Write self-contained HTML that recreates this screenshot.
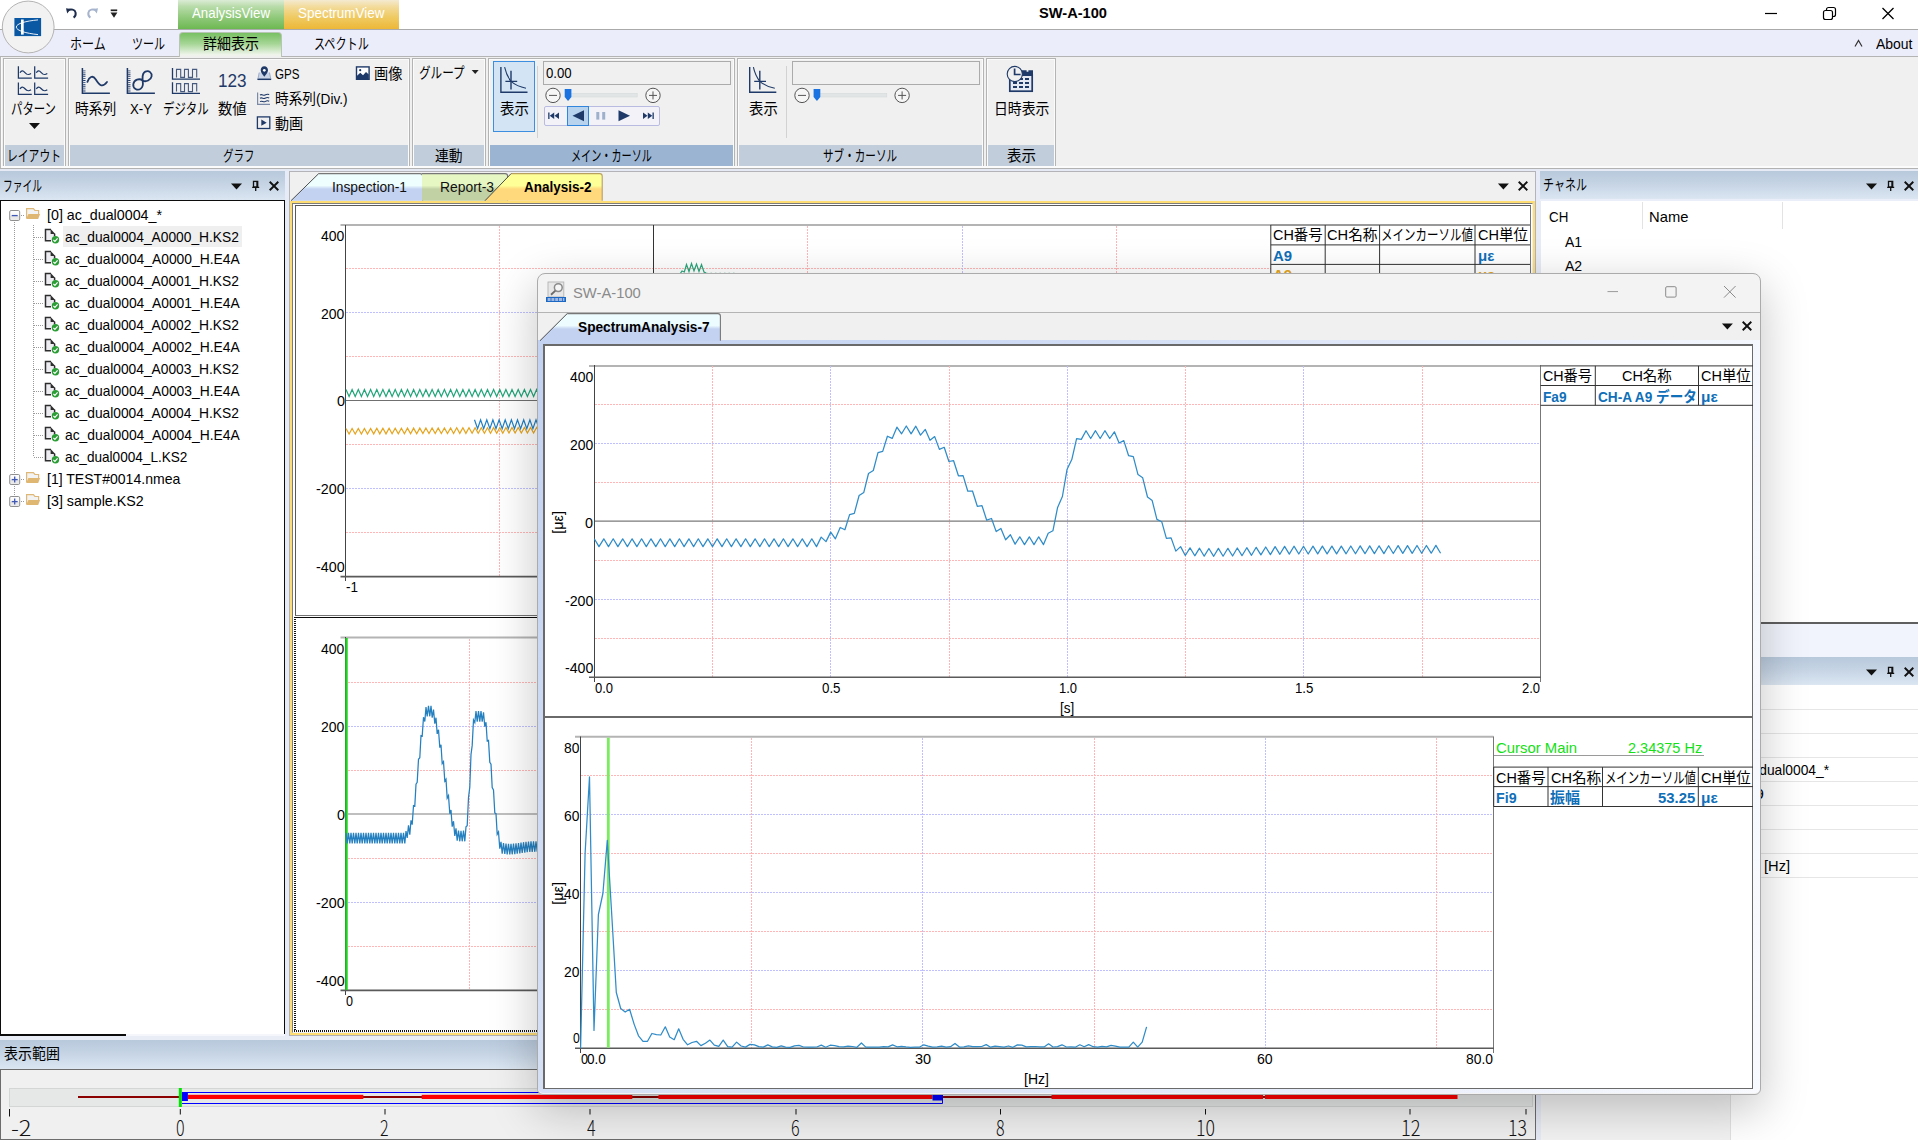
<!DOCTYPE html>
<html lang="ja"><head><meta charset="utf-8"><title>SW-A-100</title>
<style>
html,body{margin:0;padding:0}
body{width:1918px;height:1140px;overflow:hidden;position:relative;background:#f0f0f0;font-family:'Liberation Sans','Noto Sans CJK JP',sans-serif;font-size:15px;color:#000}
.b{position:absolute;display:block}
.t{position:absolute;white-space:pre;transform-origin:0 50%;display:block}
svg{overflow:visible}
svg text{font-family:'Liberation Sans','Noto Sans CJK JP',sans-serif}
</style></head>
<body>
<!-- p1_top -->
<div class="b" style="left:0px;top:0px;width:1918px;height:29px;background:#fff"></div>
<div class="b" style="left:0px;top:29px;width:1918px;height:1px;background:#aaa"></div>
<div class="b" style="left:0px;top:30px;width:1918px;height:26px;background:#ecedfb"></div>
<div class="b" style="left:0px;top:56px;width:1918px;height:1px;background:#b4b4b4"></div>
<div class="b" style="left:0px;top:57px;width:1918px;height:109px;background:#f0f0f0"></div>
<div class="b" style="left:0px;top:165.7px;width:1918px;height:2.0px;background:#fbfbfb"></div>
<div class="b" style="left:0px;top:167.7px;width:1918px;height:1.6000000000000227px;background:#b2b2b2"></div>
<div class="b" style="left:0px;top:169.3px;width:1918px;height:1.6999999999999886px;background:#e6eaf4"></div>
<div class="b" style="left:0px;top:57px;width:1px;height:111px;background:#b8b8b8"></div>
<div class="b" style="left:1px;top:57px;width:1px;height:109px;background:#fbfbfb"></div>
<div class="b" style="left:178px;top:0px;width:106px;height:29px;background:linear-gradient(#dcecd6,#b9dcab 22%,#90c97b 60%,#6db852)"></div>
<div class="b" style="left:284px;top:0px;width:115px;height:29px;background:linear-gradient(#f4ead0,#f2da98 25%,#efc95f 62%,#edb838)"></div>
<span class="t" style="left:192.0px;top:3.0px;font-size:15px;line-height:20px;font-weight:400;color:#fff;transform:scaleX(0.8853);">AnalysisView</span>
<span class="t" style="left:298.3px;top:3.0px;font-size:15px;line-height:20px;font-weight:400;color:#fff;transform:scaleX(0.8959);">SpectrumView</span>
<div class="b" style="left:179px;top:32px;width:103px;height:25px;background:linear-gradient(#78bf62,#a6d696 45%,#eef4ea 90%,#f0f0f0);border:1px solid #b8c4b4;border-bottom:none;border-radius:4px 4px 0 0;box-sizing:border-box"></div>
<span class="t" style="left:70.0px;top:34.0px;font-size:15px;line-height:20px;font-weight:400;color:#000;transform:scaleX(0.8011);">ホーム</span>
<span class="t" style="left:131.7px;top:34.0px;font-size:15px;line-height:20px;font-weight:400;color:#000;transform:scaleX(0.7353);">ツール</span>
<span class="t" style="left:202.9px;top:34.0px;font-size:15px;line-height:20px;font-weight:400;color:#000;transform:scaleX(0.9314);">詳細表示</span>
<span class="t" style="left:314.2px;top:34.0px;font-size:15px;line-height:20px;font-weight:400;color:#000;transform:scaleX(0.7410);">スペクトル</span>
<span class="t" style="left:1875.5px;top:33.5px;font-size:15px;line-height:20px;font-weight:400;color:#000;transform:scaleX(0.9310);">About</span>
<svg class="b" style="left:1853px;top:38px" width="12" height="10"><path d="M2 8.5 L5.5 2.5 L9 8.5" fill="none" stroke="#333" stroke-width="1.2"/></svg>
<span class="t" style="left:1039.0px;top:3.0px;font-size:15px;line-height:20px;font-weight:700;color:#000;transform:scaleX(0.9753);">SW-A-100</span>
<svg class="b" style="left:1760px;top:0" width="158" height="29"><path d="M5 13.5 H17" stroke="#000" stroke-width="1.2"/><rect x="63.5" y="10.5" width="9" height="9" rx="2" fill="#fff" stroke="#000" stroke-width="1.2"/><path d="M66.5 10 V9.5 a2 2 0 0 1 2 -2 H73.5 a2 2 0 0 1 2 2 V14.5 a2 2 0 0 1 -2 2 H73" fill="none" stroke="#000" stroke-width="1.2"/><path d="M122.5 8 L133.5 19 M133.5 8 L122.5 19" stroke="#000" stroke-width="1.3"/></svg>
<svg class="b" style="left:0;top:0" width="58" height="56"><circle cx="28.2" cy="27" r="25.9" fill="#f2f2f2" stroke="#b4b4b4" stroke-width="1"/><rect x="14.4" y="18" width="26.7" height="18.1" fill="#0a57a4"/><path d="M38 19.9 C26 21 16.3 23.5 16.3 27.1 C16.3 30.6 26 33.3 38 34.6" stroke="#fff" stroke-width="0.9" fill="none"/><rect x="21" y="19.5" width="2.7" height="15.1" fill="#fff"/></svg>
<svg class="b" style="left:60px;top:4px" width="64" height="18"><path d="M7.6 6.3 C11 4.6 15 5.4 15.6 8.6 C16 10.8 15 12.6 13.6 13.6" fill="none" stroke="#1f2d4d" stroke-width="2"/><path d="M6 4.2 L10.8 5 L7.2 9.4 Z" fill="#1f2d4d"/><path d="M36.4 6.3 C33 4.6 29 5.4 28.4 8.6 C28 10.8 29 12.6 30.4 13.6" fill="none" stroke="#a7b4cd" stroke-width="2"/><path d="M38 4.2 L33.2 5 L36.8 9.4 Z" fill="#a7b4cd"/><path d="M50.7 6.3 H57.2" stroke="#222" stroke-width="1.7"/><path d="M50.5 8.6 H57.4 L54 13.8 Z" fill="#222"/></svg>
<div class="b" style="left:3px;top:58px;width:63px;height:107.69999999999999px;border:1px solid #b4b4b4;border-bottom:none;box-sizing:border-box;box-shadow:inset 1px 1px 0 0 #fbfbfb,inset -1px 0 0 0 #fbfbfb"></div><div class="b" style="left:5px;top:145px;width:59px;height:20.69999999999999px;background:#c1cddb"></div><span class="t" style="left:7.2px;top:145.5px;font-size:15px;line-height:20px;font-weight:400;color:#000;transform:scaleX(0.7199);">レイアウト</span>
<div class="b" style="left:68px;top:58px;width:342px;height:107.69999999999999px;border:1px solid #b4b4b4;border-bottom:none;box-sizing:border-box;box-shadow:inset 1px 1px 0 0 #fbfbfb,inset -1px 0 0 0 #fbfbfb"></div><div class="b" style="left:70px;top:145px;width:338px;height:20.69999999999999px;background:#c1cddb"></div><span class="t" style="left:223.4px;top:145.5px;font-size:15px;line-height:20px;font-weight:400;color:#000;transform:scaleX(0.6975);">グラフ</span>
<div class="b" style="left:412px;top:58px;width:74px;height:107.69999999999999px;border:1px solid #b4b4b4;border-bottom:none;box-sizing:border-box;box-shadow:inset 1px 1px 0 0 #fbfbfb,inset -1px 0 0 0 #fbfbfb"></div><div class="b" style="left:414px;top:145px;width:70px;height:20.69999999999999px;background:#c1cddb"></div><span class="t" style="left:434.6px;top:145.5px;font-size:15px;line-height:20px;font-weight:400;color:#000;transform:scaleX(0.9195);">連動</span>
<div class="b" style="left:488px;top:58px;width:247px;height:107.69999999999999px;border:1px solid #b4b4b4;border-bottom:none;box-sizing:border-box;box-shadow:inset 1px 1px 0 0 #fbfbfb,inset -1px 0 0 0 #fbfbfb"></div><div class="b" style="left:490px;top:145px;width:243px;height:20.69999999999999px;background:#9bb4d2"></div><span class="t" style="left:570.9px;top:145.5px;font-size:15px;line-height:20px;font-weight:400;color:#000;transform:scaleX(0.6741);">メイン・カーソル</span>
<div class="b" style="left:737px;top:58px;width:247px;height:107.69999999999999px;border:1px solid #b4b4b4;border-bottom:none;box-sizing:border-box;box-shadow:inset 1px 1px 0 0 #fbfbfb,inset -1px 0 0 0 #fbfbfb"></div><div class="b" style="left:739px;top:145px;width:243px;height:20.69999999999999px;background:#c1cddb"></div><span class="t" style="left:823.2px;top:145.5px;font-size:15px;line-height:20px;font-weight:400;color:#000;transform:scaleX(0.7056);">サブ・カーソル</span>
<div class="b" style="left:986px;top:58px;width:70px;height:107.69999999999999px;border:1px solid #b4b4b4;border-bottom:none;box-sizing:border-box;box-shadow:inset 1px 1px 0 0 #fbfbfb,inset -1px 0 0 0 #fbfbfb"></div><div class="b" style="left:988px;top:145px;width:66px;height:20.69999999999999px;background:#c1cddb"></div><span class="t" style="left:1006.6px;top:145.5px;font-size:15px;line-height:20px;font-weight:400;color:#000;transform:scaleX(0.9628);">表示</span>
<span class="t" style="left:11.2px;top:99.0px;font-size:15px;line-height:20px;font-weight:400;color:#000;transform:scaleX(0.7593);">パターン</span>
<span class="t" style="left:74.9px;top:99.0px;font-size:15px;line-height:20px;font-weight:400;color:#000;transform:scaleX(0.9197);">時系列</span>
<span class="t" style="left:130.0px;top:99.0px;font-size:15px;line-height:20px;font-weight:400;color:#000;transform:scaleX(0.8795);">X-Y</span>
<span class="t" style="left:163.4px;top:99.0px;font-size:15px;line-height:20px;font-weight:400;color:#000;transform:scaleX(0.7638);">デジタル</span>
<span class="t" style="left:217.6px;top:99.0px;font-size:15px;line-height:20px;font-weight:400;color:#000;transform:scaleX(0.9562);">数値</span>
<span class="t" style="left:275.0px;top:64.2px;font-size:15px;line-height:20px;font-weight:400;color:#000;transform:scaleX(0.7732);">GPS</span>
<span class="t" style="left:274.9px;top:89.2px;font-size:15px;line-height:20px;font-weight:400;color:#000;transform:scaleX(0.9107);">時系列(Div.)</span>
<span class="t" style="left:274.9px;top:114.2px;font-size:15px;line-height:20px;font-weight:400;color:#000;transform:scaleX(0.9362);">動画</span>
<span class="t" style="left:373.8px;top:64.2px;font-size:15px;line-height:20px;font-weight:400;color:#000;transform:scaleX(0.9462);">画像</span>
<span class="t" style="left:419.2px;top:62.5px;font-size:15px;line-height:20px;font-weight:400;color:#000;transform:scaleX(0.7715);">グループ</span>
<svg class="b" style="left:471px;top:69px" width="9" height="6"><path d="M0.7 1 H7.7 L4.2 5 Z" fill="#222"/></svg>
<svg class="b" style="left:28px;top:122px" width="14" height="8"><path d="M1 1 H12 L6.5 7 Z" fill="#111"/></svg>
<div class="b" style="left:493px;top:61px;width:42px;height:71px;background:#d3e5f5;border:1px solid #3c8ee0;box-sizing:border-box"></div>
<span class="t" style="left:499.6px;top:99.2px;font-size:15px;line-height:20px;font-weight:400;color:#000;transform:scaleX(0.9628);">表示</span>
<span class="t" style="left:748.7px;top:98.5px;font-size:15px;line-height:20px;font-weight:400;color:#000;transform:scaleX(0.9595);">表示</span>
<span class="t" style="left:993.7px;top:98.5px;font-size:15px;line-height:20px;font-weight:400;color:#000;transform:scaleX(0.9248);">日時表示</span>
<div class="b" style="left:537px;top:66px;width:1px;height:72px;background:#d2d2d2"></div>
<div class="b" style="left:786px;top:66px;width:1px;height:72px;background:#d2d2d2"></div>
<div class="b" style="left:543px;top:61px;width:188px;height:24px;border:1px solid #ababab;box-sizing:border-box;background:#f0f0f0"></div>
<div class="b" style="left:792px;top:61px;width:188px;height:24px;border:1px solid #ababab;box-sizing:border-box;background:#f0f0f0"></div>
<span class="t" style="left:546.3px;top:63.0px;font-size:15px;line-height:20px;font-weight:400;color:#000;transform:scaleX(0.8800);">0.00</span>
<svg class="b" style="left:544.3px;top:86px" width="118.0" height="18"><rect x="25.700000000000045" y="7.5" width="67.5" height="3.5" fill="#e2e5e5" stroke="#d6d9d9" stroke-width="0.6"/><circle cx="9" cy="9.4" r="7.2" fill="#f6f6f6" stroke="#555" stroke-width="1"/><path d="M5 9.4 H13" stroke="#555" stroke-width="1"/><circle cx="109.0" cy="9.4" r="7.2" fill="#f6f6f6" stroke="#555" stroke-width="1"/><path d="M105.0 9.4 H113.0 M109.0 5.4 V13.4" stroke="#555" stroke-width="1"/><path d="M20.700000000000045 3 H27.400000000000045 V11 L24.050000000000047 15 L20.700000000000045 11 Z" fill="#1a73e0"/></svg>
<svg class="b" style="left:793.2px;top:86px" width="118.09999999999991" height="18"><rect x="25.59999999999991" y="7.5" width="68.20000000000005" height="3.5" fill="#e2e5e5" stroke="#d6d9d9" stroke-width="0.6"/><circle cx="9" cy="9.4" r="7.2" fill="#f6f6f6" stroke="#555" stroke-width="1"/><path d="M5 9.4 H13" stroke="#555" stroke-width="1"/><circle cx="109.09999999999991" cy="9.4" r="7.2" fill="#f6f6f6" stroke="#555" stroke-width="1"/><path d="M105.09999999999991 9.4 H113.09999999999991 M109.09999999999991 5.4 V13.4" stroke="#555" stroke-width="1"/><path d="M20.59999999999991 3 H27.29999999999991 V11 L23.94999999999991 15 L20.59999999999991 11 Z" fill="#1a73e0"/></svg>
<div class="b" style="left:544px;top:106px;width:116px;height:20px;border:1px solid #b9bce0;box-sizing:border-box;background:#f2f2f8;border-radius:2px"></div>
<div class="b" style="left:567px;top:106px;width:22px;height:20px;border:1px solid #2f86dc;box-sizing:border-box;background:#b7d3ee"></div>
<svg class="b" style="left:544px;top:106px" width="116" height="20"><g fill="#1f3a68"><rect x="4.2" y="6.5" width="1.3" height="6.5"/><path d="M10.2 6.5 V13 L5.7 9.75 Z M15 6.5 V13 L10.5 9.75 Z"/><path d="M40 4.3 V15.3 L28.5 9.8 Z"/><path d="M48.5 4.3 L60 9.8 L48.5 15.3 Z" transform="translate(26 0)"/><path d="M99 6.5 V13 L103.5 9.75 Z M103.8 6.5 V13 L108.3 9.75 Z"/><rect x="108.5" y="6.5" width="1.3" height="6.5"/></g><rect x="52.3" y="6" width="3" height="7.6" fill="#9fb0cc"/><rect x="58.2" y="6" width="3" height="7.6" fill="#9fb0cc"/></svg>
<!-- p2_panels -->
<div class="b" style="left:0px;top:171px;width:1918px;height:969px;background:#e7ebf7"></div>
<div class="b" style="left:0px;top:171px;width:285px;height:29px;background:linear-gradient(#b8c9dc,#c7d5e5 50%,#dbe6f2)"></div>
<span class="t" style="left:3.4px;top:175.8px;font-size:15px;line-height:20px;font-weight:400;color:#000;transform:scaleX(0.6482);">ファイル</span>
<svg class="b" style="left:228.8px;top:178px" width="56" height="16"><path d="M2.0 5.5 H13.0 L7.5 11.5 Z" fill="#111"/><g stroke="#111" stroke-width="1.3" fill="none"><path d="M23.2 9.3 H30.2 M26.7 9.3 V13"/><rect x="24.5" y="3.4" width="4.2" height="5.6"/><path d="M28.1 3.4 V9" stroke-width="1.6"/></g><path d="M40.7 3.8 L49.3 12.2 M49.3 3.8 L40.7 12.2" stroke="#111" stroke-width="1.9"/></svg>
<div class="b" style="left:0px;top:200px;width:285px;height:836px;background:#fff;border:1.5px solid #0c0c0c;border-right-width:1.7px;box-sizing:border-box;border-bottom:none"></div>
<div class="b" style="left:0px;top:1034.3px;width:126px;height:1.7000000000000455px;background:#0c0c0c"></div>
<div class="b" style="left:126px;top:1034px;width:159px;height:2px;background:#f4f6fb"></div>
<div class="b" style="left:63px;top:226px;width:179px;height:21px;background:#efefef"></div>
<svg class="b" style="left:0;top:200px" width="285" height="320"><defs><linearGradient id="ebg" x1="0" y1="0" x2="0" y2="1"><stop offset="0" stop-color="#fff"/><stop offset="0.55" stop-color="#f6f6f6"/><stop offset="0.56" stop-color="#e6e6e6"/><stop offset="1" stop-color="#ededed"/></linearGradient></defs><g stroke="#9a9a9a" stroke-width="1" stroke-dasharray="1 1" fill="none"><path d="M14.5 20 V296"/><path d="M33.5 25 V256.5"/><path d="M21 15.5 H25"/><path d="M21 279.5 H25"/><path d="M21 301.5 H25"/><path d="M34 37.5 H44"/><path d="M34 59.5 H44"/><path d="M34 81.5 H44"/><path d="M34 103.5 H44"/><path d="M34 125.5 H44"/><path d="M34 147.5 H44"/><path d="M34 169.5 H44"/><path d="M34 191.5 H44"/><path d="M34 213.5 H44"/><path d="M34 235.5 H44"/><path d="M34 257.5 H44"/></g><rect x="9.7" y="10.5" width="10" height="10" rx="1.4" fill="url(#ebg)" stroke="#8f8f8f"/><path d="M11.7 15.6 H17.7" stroke="#3f58b4" stroke-width="1.3"/><path d="M26.6 18.3 V8.7 H33.4 L34.9 10.5 H38.6 V14.1" fill="#f3f3f3" stroke="#dfb877" stroke-width="1.2"/><path d="M28.4 14.1 H40.1 L38.2 18.9 H26.2 Z" fill="#e0b673"/><path d="M45.5 29.6 H51 L54.6 33.5 V40.7 H45.5 Z" fill="#ededf1"/><path d="M54.6 33.7 V36.2 M51 40.7 H45.5 V29.6 H51" fill="none" stroke="#2e2e2e" stroke-width="1.5"/><path d="M50.6 29.000000000000004 L55.3 34.0 H50.6 Z" fill="#2e2e2e"/><circle cx="55.5" cy="39.7" r="3.7" fill="#2a9d34"/><path d="M53.4 39.800000000000004 L54.9 41.300000000000004 L57.6 38.300000000000004" fill="none" stroke="#fff" stroke-width="1.2"/><path d="M45.5 51.6 H51 L54.6 55.5 V62.7 H45.5 Z" fill="#ededf1"/><path d="M54.6 55.7 V58.2 M51 62.7 H45.5 V51.6 H51" fill="none" stroke="#2e2e2e" stroke-width="1.5"/><path d="M50.6 51.0 L55.3 56.0 H50.6 Z" fill="#2e2e2e"/><circle cx="55.5" cy="61.7" r="3.7" fill="#2a9d34"/><path d="M53.4 61.800000000000004 L54.9 63.300000000000004 L57.6 60.300000000000004" fill="none" stroke="#fff" stroke-width="1.2"/><path d="M45.5 73.60000000000001 H51 L54.6 77.5 V84.7 H45.5 Z" fill="#ededf1"/><path d="M54.6 77.7 V80.2 M51 84.7 H45.5 V73.60000000000001 H51" fill="none" stroke="#2e2e2e" stroke-width="1.5"/><path d="M50.6 73.0 L55.3 78.0 H50.6 Z" fill="#2e2e2e"/><circle cx="55.5" cy="83.7" r="3.7" fill="#2a9d34"/><path d="M53.4 83.8 L54.9 85.3 L57.6 82.3" fill="none" stroke="#fff" stroke-width="1.2"/><path d="M45.5 95.60000000000001 H51 L54.6 99.5 V106.7 H45.5 Z" fill="#ededf1"/><path d="M54.6 99.7 V102.2 M51 106.7 H45.5 V95.60000000000001 H51" fill="none" stroke="#2e2e2e" stroke-width="1.5"/><path d="M50.6 95.0 L55.3 100.0 H50.6 Z" fill="#2e2e2e"/><circle cx="55.5" cy="105.7" r="3.7" fill="#2a9d34"/><path d="M53.4 105.8 L54.9 107.3 L57.6 104.3" fill="none" stroke="#fff" stroke-width="1.2"/><path d="M45.5 117.60000000000001 H51 L54.6 121.5 V128.7 H45.5 Z" fill="#ededf1"/><path d="M54.6 121.7 V124.2 M51 128.7 H45.5 V117.60000000000001 H51" fill="none" stroke="#2e2e2e" stroke-width="1.5"/><path d="M50.6 117.0 L55.3 122.0 H50.6 Z" fill="#2e2e2e"/><circle cx="55.5" cy="127.7" r="3.7" fill="#2a9d34"/><path d="M53.4 127.8 L54.9 129.3 L57.6 126.3" fill="none" stroke="#fff" stroke-width="1.2"/><path d="M45.5 139.6 H51 L54.6 143.5 V150.7 H45.5 Z" fill="#ededf1"/><path d="M54.6 143.7 V146.2 M51 150.7 H45.5 V139.6 H51" fill="none" stroke="#2e2e2e" stroke-width="1.5"/><path d="M50.6 139.0 L55.3 144.0 H50.6 Z" fill="#2e2e2e"/><circle cx="55.5" cy="149.7" r="3.7" fill="#2a9d34"/><path d="M53.4 149.79999999999998 L54.9 151.29999999999998 L57.6 148.29999999999998" fill="none" stroke="#fff" stroke-width="1.2"/><path d="M45.5 161.6 H51 L54.6 165.5 V172.7 H45.5 Z" fill="#ededf1"/><path d="M54.6 165.7 V168.2 M51 172.7 H45.5 V161.6 H51" fill="none" stroke="#2e2e2e" stroke-width="1.5"/><path d="M50.6 161.0 L55.3 166.0 H50.6 Z" fill="#2e2e2e"/><circle cx="55.5" cy="171.7" r="3.7" fill="#2a9d34"/><path d="M53.4 171.79999999999998 L54.9 173.29999999999998 L57.6 170.29999999999998" fill="none" stroke="#fff" stroke-width="1.2"/><path d="M45.5 183.6 H51 L54.6 187.5 V194.7 H45.5 Z" fill="#ededf1"/><path d="M54.6 187.7 V190.2 M51 194.7 H45.5 V183.6 H51" fill="none" stroke="#2e2e2e" stroke-width="1.5"/><path d="M50.6 183.0 L55.3 188.0 H50.6 Z" fill="#2e2e2e"/><circle cx="55.5" cy="193.7" r="3.7" fill="#2a9d34"/><path d="M53.4 193.79999999999998 L54.9 195.29999999999998 L57.6 192.29999999999998" fill="none" stroke="#fff" stroke-width="1.2"/><path d="M45.5 205.6 H51 L54.6 209.5 V216.7 H45.5 Z" fill="#ededf1"/><path d="M54.6 209.7 V212.2 M51 216.7 H45.5 V205.6 H51" fill="none" stroke="#2e2e2e" stroke-width="1.5"/><path d="M50.6 205.0 L55.3 210.0 H50.6 Z" fill="#2e2e2e"/><circle cx="55.5" cy="215.7" r="3.7" fill="#2a9d34"/><path d="M53.4 215.79999999999998 L54.9 217.29999999999998 L57.6 214.29999999999998" fill="none" stroke="#fff" stroke-width="1.2"/><path d="M45.5 227.6 H51 L54.6 231.5 V238.7 H45.5 Z" fill="#ededf1"/><path d="M54.6 231.7 V234.2 M51 238.7 H45.5 V227.6 H51" fill="none" stroke="#2e2e2e" stroke-width="1.5"/><path d="M50.6 227.0 L55.3 232.0 H50.6 Z" fill="#2e2e2e"/><circle cx="55.5" cy="237.7" r="3.7" fill="#2a9d34"/><path d="M53.4 237.79999999999998 L54.9 239.29999999999998 L57.6 236.29999999999998" fill="none" stroke="#fff" stroke-width="1.2"/><path d="M45.5 249.6 H51 L54.6 253.5 V260.7 H45.5 Z" fill="#ededf1"/><path d="M54.6 253.7 V256.2 M51 260.7 H45.5 V249.6 H51" fill="none" stroke="#2e2e2e" stroke-width="1.5"/><path d="M50.6 249.0 L55.3 254.0 H50.6 Z" fill="#2e2e2e"/><circle cx="55.5" cy="259.7" r="3.7" fill="#2a9d34"/><path d="M53.4 259.8 L54.9 261.3 L57.6 258.3" fill="none" stroke="#fff" stroke-width="1.2"/><rect x="9.7" y="274.5" width="10" height="10" rx="1.4" fill="url(#ebg)" stroke="#8f8f8f"/><path d="M11.7 279.6 H17.7" stroke="#3f58b4" stroke-width="1.3"/><path d="M14.7 276.6 V282.6" stroke="#3f58b4" stroke-width="1.3"/><path d="M26.6 282.3 V272.7 H33.4 L34.9 274.5 H38.6 V278.09999999999997" fill="#f3f3f3" stroke="#dfb877" stroke-width="1.2"/><path d="M28.4 278.09999999999997 H40.1 L38.2 282.9 H26.2 Z" fill="#e0b673"/><rect x="9.7" y="296.5" width="10" height="10" rx="1.4" fill="url(#ebg)" stroke="#8f8f8f"/><path d="M11.7 301.6 H17.7" stroke="#3f58b4" stroke-width="1.3"/><path d="M14.7 298.6 V304.6" stroke="#3f58b4" stroke-width="1.3"/><path d="M26.6 304.3 V294.7 H33.4 L34.9 296.5 H38.6 V300.09999999999997" fill="#f3f3f3" stroke="#dfb877" stroke-width="1.2"/><path d="M28.4 300.09999999999997 H40.1 L38.2 304.9 H26.2 Z" fill="#e0b673"/></svg>
<span class="t" style="left:46.7px;top:205.0px;font-size:15px;line-height:20px;font-weight:400;color:#000;transform:scaleX(0.9509);">[0] ac_dual0004_*</span>
<span class="t" style="left:65.3px;top:227.0px;font-size:15px;line-height:20px;font-weight:400;color:#000;transform:scaleX(0.9185);">ac_dual0004_A0000_H.KS2</span>
<span class="t" style="left:65.3px;top:249.0px;font-size:15px;line-height:20px;font-weight:400;color:#000;transform:scaleX(0.9227);">ac_dual0004_A0000_H.E4A</span>
<span class="t" style="left:65.3px;top:271.0px;font-size:15px;line-height:20px;font-weight:400;color:#000;transform:scaleX(0.9185);">ac_dual0004_A0001_H.KS2</span>
<span class="t" style="left:65.3px;top:293.0px;font-size:15px;line-height:20px;font-weight:400;color:#000;transform:scaleX(0.9227);">ac_dual0004_A0001_H.E4A</span>
<span class="t" style="left:65.3px;top:315.0px;font-size:15px;line-height:20px;font-weight:400;color:#000;transform:scaleX(0.9185);">ac_dual0004_A0002_H.KS2</span>
<span class="t" style="left:65.3px;top:337.0px;font-size:15px;line-height:20px;font-weight:400;color:#000;transform:scaleX(0.9227);">ac_dual0004_A0002_H.E4A</span>
<span class="t" style="left:65.3px;top:359.0px;font-size:15px;line-height:20px;font-weight:400;color:#000;transform:scaleX(0.9185);">ac_dual0004_A0003_H.KS2</span>
<span class="t" style="left:65.3px;top:381.0px;font-size:15px;line-height:20px;font-weight:400;color:#000;transform:scaleX(0.9227);">ac_dual0004_A0003_H.E4A</span>
<span class="t" style="left:65.3px;top:403.0px;font-size:15px;line-height:20px;font-weight:400;color:#000;transform:scaleX(0.9185);">ac_dual0004_A0004_H.KS2</span>
<span class="t" style="left:65.3px;top:425.0px;font-size:15px;line-height:20px;font-weight:400;color:#000;transform:scaleX(0.9227);">ac_dual0004_A0004_H.E4A</span>
<span class="t" style="left:65.3px;top:447.0px;font-size:15px;line-height:20px;font-weight:400;color:#000;transform:scaleX(0.9058);">ac_dual0004_L.KS2</span>
<span class="t" style="left:46.7px;top:469.0px;font-size:15px;line-height:20px;font-weight:400;color:#000;transform:scaleX(0.9367);">[1] TEST#0014.nmea</span>
<span class="t" style="left:46.7px;top:491.0px;font-size:15px;line-height:20px;font-weight:400;color:#000;transform:scaleX(0.9497);">[3] sample.KS2</span>
<div class="b" style="left:1540px;top:171px;width:378px;height:28px;background:linear-gradient(#b8c9dc,#c7d5e5 50%,#dbe6f2)"></div>
<span class="t" style="left:1543.4px;top:175.3px;font-size:15px;line-height:20px;font-weight:400;color:#000;transform:scaleX(0.7334);">チャネル</span>
<svg class="b" style="left:1863.6px;top:178px" width="56" height="16"><path d="M2.0 5.5 H13.0 L7.5 11.5 Z" fill="#111"/><g stroke="#111" stroke-width="1.3" fill="none"><path d="M23.2 9.3 H30.2 M26.7 9.3 V13"/><rect x="24.5" y="3.4" width="4.2" height="5.6"/><path d="M28.1 3.4 V9" stroke-width="1.6"/></g><path d="M40.7 3.8 L49.3 12.2 M49.3 3.8 L40.7 12.2" stroke="#111" stroke-width="1.9"/></svg>
<div class="b" style="left:1540px;top:199px;width:378px;height:2px;background:#e9eef8"></div>
<div class="b" style="left:1541px;top:201px;width:377px;height:421px;background:#fff"></div>
<div class="b" style="left:1642px;top:202px;width:1px;height:27px;background:#e3e3e3"></div>
<div class="b" style="left:1782px;top:202px;width:1px;height:27px;background:#e3e3e3"></div>
<span class="t" style="left:1549.0px;top:206.8px;font-size:15px;line-height:20px;font-weight:400;color:#000;transform:scaleX(0.8906);">CH</span>
<span class="t" style="left:1649.3px;top:206.8px;font-size:15px;line-height:20px;font-weight:400;color:#000;transform:scaleX(0.9846);">Name</span>
<span class="t" style="left:1565.4px;top:231.8px;font-size:15px;line-height:20px;font-weight:400;color:#000;transform:scaleX(0.9369);">A1</span>
<span class="t" style="left:1565.4px;top:256.0px;font-size:15px;line-height:20px;font-weight:400;color:#000;transform:scaleX(0.9369);">A2</span>
<div class="b" style="left:1541px;top:622px;width:377px;height:2px;background:#5f5f5f"></div>
<div class="b" style="left:1541px;top:624px;width:377px;height:33px;background:#f1f4fc"></div>
<div class="b" style="left:1540px;top:657px;width:378px;height:28px;background:linear-gradient(#b8c9dc,#c7d5e5 50%,#dbe6f2)"></div>
<svg class="b" style="left:1863.7px;top:663.7px" width="56" height="16"><path d="M2.0 5.5 H13.0 L7.5 11.5 Z" fill="#111"/><g stroke="#111" stroke-width="1.3" fill="none"><path d="M23.2 9.3 H30.2 M26.7 9.3 V13"/><rect x="24.5" y="3.4" width="4.2" height="5.6"/><path d="M28.1 3.4 V9" stroke-width="1.6"/></g><path d="M40.7 3.8 L49.3 12.2 M49.3 3.8 L40.7 12.2" stroke="#111" stroke-width="1.9"/></svg>
<div class="b" style="left:1541px;top:685px;width:377px;height:455px;background:#fff"></div>
<div class="b" style="left:1541px;top:709px;width:377px;height:1px;background:#e6e6e6"></div>
<div class="b" style="left:1541px;top:733px;width:377px;height:1px;background:#e6e6e6"></div>
<div class="b" style="left:1541px;top:757px;width:377px;height:1px;background:#e6e6e6"></div>
<div class="b" style="left:1541px;top:781px;width:377px;height:1px;background:#e6e6e6"></div>
<div class="b" style="left:1541px;top:805px;width:377px;height:1px;background:#e6e6e6"></div>
<div class="b" style="left:1541px;top:829px;width:377px;height:1px;background:#e6e6e6"></div>
<div class="b" style="left:1541px;top:853px;width:377px;height:1px;background:#e6e6e6"></div>
<div class="b" style="left:1541px;top:877px;width:377px;height:1px;background:#e6e6e6"></div>
<span class="t" style="left:1737.0px;top:760.3px;font-size:15px;line-height:20px;font-weight:400;color:#000;transform:scaleX(0.9191);">ac_dual0004_*</span>
<span class="t" style="left:1745.0px;top:784.0px;font-size:15px;line-height:20px;font-weight:400;color:#000;transform:scaleX(1.0349);">A9</span>
<span class="t" style="left:1763.9px;top:856.4px;font-size:15px;line-height:20px;font-weight:400;color:#000;transform:scaleX(0.9786);">[Hz]</span>
<div class="b" style="left:1541px;top:1094px;width:189px;height:46px;background:#f3f3f3"></div>
<div class="b" style="left:1730px;top:1094px;width:1px;height:46px;background:#e2e2e2"></div>
<div class="b" style="left:0px;top:1036px;width:1536px;height:4px;background:#e9edf6"></div>
<div class="b" style="left:0px;top:1040px;width:1536px;height:29px;background:linear-gradient(#b8c9dc,#c7d5e5 50%,#dbe6f2)"></div>
<span class="t" style="left:3.8px;top:1044.0px;font-size:15px;line-height:20px;font-weight:400;color:#000;transform:scaleX(0.9314);">表示範囲</span>
<div class="b" style="left:0px;top:1069px;width:1536px;height:71px;background:#f0f0f0;border:1px solid #6c6c6c;box-sizing:border-box"></div>
<svg class="b" style="left:0;top:1069px" width="1536" height="71"><rect x="9.5" y="19.5" width="1523" height="18" fill="#e6e8e8" stroke="#d4d6d6"/><rect x="78" y="27" width="101" height="2" fill="#8b0000"/><rect x="363" y="27" width="59" height="2" fill="#8b0000"/><rect x="632" y="27" width="27" height="2" fill="#8b0000"/><rect x="942" y="27" width="110" height="2" fill="#8b0000"/><rect x="1262" y="27" width="4" height="2" fill="#8b0000"/><rect x="187.8" y="25.8" width="175.5" height="4.2" fill="#ff0000"/><rect x="421.7" y="25.8" width="210.59999999999997" height="4.2" fill="#ff0000"/><rect x="658.5" y="25.8" width="274.0" height="4.2" fill="#ff0000"/><rect x="1051.5" y="25.8" width="211.5" height="4.2" fill="#ff0000"/><rect x="1265" y="25.8" width="192.5" height="4.2" fill="#ff0000"/><path d="M182 23.5 H942.5 V34.5 H182" fill="none" stroke="#0000ff" stroke-width="1"/><rect x="181.7" y="23.5" width="6.2" height="8.5" fill="#0000ff"/><rect x="932.5" y="25" width="10" height="6.5" fill="#0000ff"/><rect x="178.8" y="19" width="3" height="19" fill="#00e400"/><path d="M9.5 40 V47.5" stroke="#111" stroke-width="1"/><path d="M180.3 40 V45.5" stroke="#111" stroke-width="1"/><path d="M385 40 V45.5" stroke="#111" stroke-width="1"/><path d="M590 40 V45.5" stroke="#111" stroke-width="1"/><path d="M796 40 V45.5" stroke="#111" stroke-width="1"/><path d="M1000.5 40 V45.5" stroke="#111" stroke-width="1"/><path d="M1205.5 40 V45.5" stroke="#111" stroke-width="1"/><path d="M1410 40 V45.5" stroke="#111" stroke-width="1"/><path d="M1526 40 V45.5" stroke="#111" stroke-width="1"/></svg>
<span class="t" style="left:10.8px;top:1114.0px;font-size:21px;line-height:27px;font-weight:300;color:#111;transform:scaleX(1.1243);font-family:'Noto Sans CJK JP',IPAGothic,sans-serif;">-2</span>
<span class="t" style="left:175.7px;top:1114.0px;font-size:21px;line-height:27px;font-weight:300;color:#111;transform:scaleX(0.7644);font-family:'Noto Sans CJK JP',IPAGothic,sans-serif;">0</span>
<span class="t" style="left:380.4px;top:1114.0px;font-size:21px;line-height:27px;font-weight:300;color:#111;transform:scaleX(0.7644);font-family:'Noto Sans CJK JP',IPAGothic,sans-serif;">2</span>
<span class="t" style="left:586.5px;top:1114.0px;font-size:21px;line-height:27px;font-weight:300;color:#111;transform:scaleX(0.7644);font-family:'Noto Sans CJK JP',IPAGothic,sans-serif;">4</span>
<span class="t" style="left:791.2px;top:1114.0px;font-size:21px;line-height:27px;font-weight:300;color:#111;transform:scaleX(0.7644);font-family:'Noto Sans CJK JP',IPAGothic,sans-serif;">6</span>
<span class="t" style="left:995.9px;top:1114.0px;font-size:21px;line-height:27px;font-weight:300;color:#111;transform:scaleX(0.7644);font-family:'Noto Sans CJK JP',IPAGothic,sans-serif;">8</span>
<span class="t" style="left:1196.0px;top:1114.0px;font-size:21px;line-height:27px;font-weight:300;color:#111;transform:scaleX(0.8450);font-family:'Noto Sans CJK JP',IPAGothic,sans-serif;">10</span>
<span class="t" style="left:1400.5px;top:1114.0px;font-size:21px;line-height:27px;font-weight:300;color:#111;transform:scaleX(0.8673);font-family:'Noto Sans CJK JP',IPAGothic,sans-serif;">12</span>
<span class="t" style="left:1507.5px;top:1114.0px;font-size:21px;line-height:27px;font-weight:300;color:#111;transform:scaleX(0.8450);font-family:'Noto Sans CJK JP',IPAGothic,sans-serif;">13</span>
<!-- p3_center -->
<div class="b" style="left:289px;top:171.3px;width:1247px;height:864.7px;background:#f0f0f0;border:1px solid #b4b4b8;box-sizing:border-box"></div>
<svg class="b" style="left:290.8px;top:173.3px" width="133.59999999999997" height="27.69999999999999"><defs><linearGradient id="gt1" x1="0" y1="0" x2="0" y2="1"><stop offset="0" stop-color="#eefefe"/><stop offset="0.44" stop-color="#eefefe"/><stop offset="0.57" stop-color="#c3d2f1"/><stop offset="1" stop-color="#c3d2f1"/></linearGradient></defs><path d="M0 27.69999999999999 L27.69999999999999 0.6 H129.09999999999997 Q131.59999999999997 0.6 131.59999999999997 3 V27.69999999999999 Z" fill="url(#gt1)"/><path d="M27.69999999999999 0.6 H129.09999999999997 Q131.59999999999997 0.6 131.59999999999997 3 V27.69999999999999" fill="none" stroke="#777" stroke-width="1.1"/><path d="M0 27.69999999999999 L27.69999999999999 0.6" fill="none" stroke="#3a3a3a" stroke-width="0.9"/></svg>
<svg class="b" style="left:422.4px;top:173.3px" width="87.60000000000002" height="27.69999999999999"><defs><linearGradient id="gt2" x1="0" y1="0" x2="0" y2="1"><stop offset="0" stop-color="#e6f7c4"/><stop offset="0.44" stop-color="#e6f7c4"/><stop offset="0.57" stop-color="#c2d1a4"/><stop offset="1" stop-color="#c2d1a4"/></linearGradient></defs><path d="M0 27.69999999999999 L0.0 0.6 H83.10000000000002 Q85.60000000000002 0.6 85.60000000000002 3 V27.69999999999999 Z" fill="url(#gt2)"/><path d="M0.0 0.6 H83.10000000000002 Q85.60000000000002 0.6 85.60000000000002 3 V27.69999999999999" fill="none" stroke="#777" stroke-width="1.1"/></svg>
<svg class="b" style="left:485.4px;top:173.3px" width="119.20000000000005" height="27.69999999999999"><defs><linearGradient id="gt3" x1="0" y1="0" x2="0" y2="1"><stop offset="0" stop-color="#ffff98"/><stop offset="0.44" stop-color="#ffff98"/><stop offset="0.57" stop-color="#ffd97c"/><stop offset="1" stop-color="#ffd97c"/></linearGradient></defs><path d="M0 27.69999999999999 L26.100000000000023 0.6 H114.70000000000005 Q117.20000000000005 0.6 117.20000000000005 3 V27.69999999999999 Z" fill="url(#gt3)"/><path d="M26.100000000000023 0.6 H114.70000000000005 Q117.20000000000005 0.6 117.20000000000005 3 V27.69999999999999" fill="none" stroke="#b8a060" stroke-width="1.1"/><path d="M0 27.69999999999999 L26.100000000000023 0.6" fill="none" stroke="#3a3a3a" stroke-width="0.9"/></svg>
<span class="t" style="left:332.0px;top:176.7px;font-size:15px;line-height:20px;font-weight:400;color:#111;transform:scaleX(0.9178);">Inspection-1</span>
<span class="t" style="left:440.0px;top:176.7px;font-size:15px;line-height:20px;font-weight:400;color:#111;transform:scaleX(0.9253);">Report-3</span>
<span class="t" style="left:524.0px;top:176.7px;font-size:15px;line-height:20px;font-weight:700;color:#000;transform:scaleX(0.8994);">Analysis-2</span>
<svg class="b" style="left:1478px;top:178.3px" width="56" height="16"><path d="M19.9 5.5 H30.9 L25.4 11.5 Z" fill="#111"/><path d="M40.7 3.8 L49.3 12.2 M49.3 3.8 L40.7 12.2" stroke="#111" stroke-width="1.9"/></svg>
<div class="b" style="left:289.8px;top:200.9px;width:1245.5px;height:834.3000000000001px;background:#fff;border:2.5px solid #ffdd75;box-sizing:border-box"></div>
<div class="b" style="left:292.2px;top:202.6px;width:1240.8px;height:830.4px;border:1.2px solid #7c7c7c;border-right-color:#f0f0f0;border-bottom-color:#f0f0f0;box-sizing:border-box"></div>
<div class="b" style="left:294.8px;top:205px;width:1236.2px;height:411.4px;border:1px solid #747474;border-top-color:#5a5a5a;border-left-color:#5a5a5a;box-sizing:border-box;background:#fff"></div>
<div class="b" style="left:293.5px;top:616.8px;width:1238.0px;height:415.20000000000005px;background:#fff"></div>
<div class="b" style="left:293.5px;top:616.8px;width:1238.0px;height:1.7000000000000455px;background:#0a0a0a"></div>
<div class="b" style="left:293.5px;top:619px;width:2.1999999999999886px;height:413px;background:repeating-linear-gradient(to bottom,#111 0 1px,#fff 1px 2px)"></div>
<div class="b" style="left:1529.3px;top:619px;width:2.2000000000000455px;height:413px;background:repeating-linear-gradient(to bottom,#111 0 1px,#fff 1px 2px)"></div>
<div class="b" style="left:293.5px;top:1029.8px;width:1238.0px;height:2.2000000000000455px;background:repeating-linear-gradient(to right,#111 0 1px,#fff 1px 2px)"></div>
<svg class="b" style="left:0;top:0" width="1536" height="1040"><path d="M340.5 225 H1271" stroke="#b4b4b4" stroke-width="2"/><path d="M346 268.5 H1271" stroke="#ffb6b6" stroke-width="1" stroke-dasharray="2 1"/><path d="M346 356.5 H1271" stroke="#ffb6b6" stroke-width="1" stroke-dasharray="2 1"/><path d="M346 444.5 H1271" stroke="#ffb6b6" stroke-width="1" stroke-dasharray="2 1"/><path d="M346 532.5 H1271" stroke="#ffb6b6" stroke-width="1" stroke-dasharray="2 1"/><path d="M346 312.5 H1271" stroke="#c0c0ff" stroke-width="1" stroke-dasharray="2 1"/><path d="M346 488.5 H1271" stroke="#c0c0ff" stroke-width="1" stroke-dasharray="2 1"/><path d="M499.5 226 V576" stroke="#ffb6b6" stroke-width="1" stroke-dasharray="2 1"/><path d="M807.5 226 V576" stroke="#ffb6b6" stroke-width="1" stroke-dasharray="2 1"/><path d="M1116.5 226 V576" stroke="#ffb6b6" stroke-width="1" stroke-dasharray="2 1"/><path d="M962.5 226 V576" stroke="#c0c0ff" stroke-width="1" stroke-dasharray="2 1"/><path d="M346 400.5 H1271" stroke="#707070" stroke-width="1.2"/><path d="M653.5 225 V576" stroke="#333" stroke-width="1"/><path d="M345.5 225 V581" stroke="#444" stroke-width="1" fill="none"/><path d="M340.5 576.6 H1271" stroke="#5a5a5a" stroke-width="1.6" fill="none"/><polyline points="346.0,389.5 349.1,396.5 352.1,389.5 355.2,396.5 358.3,389.5 361.4,396.5 364.4,389.5 367.5,396.5 370.6,389.5 373.7,396.5 376.8,389.5 379.8,396.5 382.9,389.5 386.0,396.5 389.1,389.5 392.1,396.5 395.2,389.5 398.3,396.5 401.4,389.5 404.4,396.5 407.5,389.5 410.6,396.5 413.6,389.5 416.7,396.5 419.8,389.5 422.9,396.5 425.9,389.5 429.0,396.5 432.1,389.5 435.2,396.5 438.2,389.5 441.3,396.5 444.4,389.5 447.5,396.5 450.6,389.5 453.6,396.5 456.7,389.5 459.8,396.5 462.9,389.5 465.9,396.5 469.0,389.5 472.1,396.5 475.1,389.5 478.2,396.5 481.3,389.5 484.4,396.5 487.5,389.5 490.5,396.5 493.6,389.5 496.7,396.5 499.8,389.5 502.8,396.5 505.9,389.5 509.0,396.5 512.0,389.5 515.1,396.5 518.2,389.5 521.3,396.5 524.4,389.5 527.4,396.5 530.5,389.5 533.6,396.5 536.6,389.5 539.7,396.5" fill="none" stroke="#22a57a" stroke-width="1.2"/><polyline points="346.0,428.5 349.1,434.1 352.1,428.5 355.2,434.0 358.3,428.4 361.4,434.0 364.4,428.4 367.5,434.0 370.6,428.4 373.7,433.9 376.8,428.3 379.8,433.9 382.9,428.3 386.0,433.9 389.1,428.2 392.1,433.8 395.2,428.2 398.3,433.8 401.4,428.2 404.4,433.7 407.5,428.1 410.6,433.7 413.6,428.1 416.7,433.7 419.8,428.1 422.9,433.6 425.9,428.0 429.0,433.6 432.1,428.0 435.2,433.6 438.2,427.9 441.3,433.5 444.4,427.9 447.5,433.5 450.6,427.9 453.6,433.5 456.7,427.8 459.8,433.4 462.9,427.8 465.9,433.4 469.0,427.8 472.1,433.3 475.1,427.7 478.2,433.3 481.3,427.7 484.4,433.3 487.5,427.7 490.5,433.2 493.6,427.6 496.7,433.2 499.8,427.6 502.8,433.2 505.9,427.5 509.0,433.1 512.0,427.5 515.1,433.1 518.2,427.5 521.3,433.0 524.4,427.4 527.4,433.0 530.5,427.4 533.6,433.0 536.6,427.4 539.7,432.9" fill="none" stroke="#e5a520" stroke-width="1.2"/><polyline points="474.5,419.8 477.6,428.6 480.6,419.8 483.7,428.6 486.8,419.8 489.9,428.6 492.9,419.8 496.0,428.6 499.1,419.8 502.2,428.6 505.2,419.8 508.3,428.6 511.4,419.8 514.5,428.6 517.5,419.8 520.6,428.6 523.7,419.8 526.8,428.6 529.9,419.8 532.9,428.6 536.0,419.8 539.1,428.6" fill="none" stroke="#1f7fc4" stroke-width="1.2"/><polyline points="680,274 682,271 684.3,272 686.5,264.5 689,271.5 691.5,263.5 694,271 696.5,264 699,271.5 701.5,264.5 704,272 706,273" fill="none" stroke="#2aa67c" stroke-width="1.2"/><path d="M706 273.3 H735" stroke="#2aa67c" stroke-width="1" stroke-dasharray="1.5 3"/><g stroke="#333" stroke-width="1" fill="none"><path d="M1270.8 225 V290 M1325.2 225 V290 M1379.6 225 V290 M1475 225 V290 M1270.8 225 H1530 M1270.8 244.9 H1530 M1270.8 264.4 H1530 M1270.8 284 H1530"/></g><path d="M340.5 637.5 H1271" stroke="#b4b4b4" stroke-width="2"/><path d="M348 682.5 H1271" stroke="#ffb6b6" stroke-width="1" stroke-dasharray="2 1"/><path d="M348 770.5 H1271" stroke="#ffb6b6" stroke-width="1" stroke-dasharray="2 1"/><path d="M348 858.5 H1271" stroke="#ffb6b6" stroke-width="1" stroke-dasharray="2 1"/><path d="M348 946.5 H1271" stroke="#ffb6b6" stroke-width="1" stroke-dasharray="2 1"/><path d="M348 726.5 H1271" stroke="#c0c0ff" stroke-width="1" stroke-dasharray="2 1"/><path d="M348 902.5 H1271" stroke="#c0c0ff" stroke-width="1" stroke-dasharray="2 1"/><path d="M469.5 639 V990" stroke="#ffb6b6" stroke-width="1" stroke-dasharray="2 1"/><path d="M348 814 H1271" stroke="#808080" stroke-width="1.2"/><path d="M345.5 637 V995" stroke="#444" stroke-width="1" fill="none"/><path d="M340.5 990.4 H1271" stroke="#5a5a5a" stroke-width="1.6" fill="none"/><rect x="345.3" y="638" width="2.4" height="352" fill="#1fd21f"/><polyline points="346.0,832.9 347.2,843.5 348.5,832.9 349.8,843.5 351.0,832.9 352.2,843.5 353.5,832.9 354.8,843.5 356.0,832.9 357.2,843.5 358.5,832.9 359.8,843.5 361.0,832.9 362.2,843.5 363.5,832.9 364.8,843.5 366.0,832.9 367.2,843.5 368.5,832.9 369.8,843.5 371.0,832.9 372.2,843.5 373.5,832.9 374.8,843.5 376.0,832.9 377.2,843.5 378.5,832.9 379.8,843.5 381.0,832.9 382.2,843.5 383.5,832.9 384.8,843.5 386.0,832.9 387.2,843.5 388.5,832.9 389.8,843.5 391.0,832.9 392.2,843.5 393.5,832.9 394.8,843.5 396.0,832.9 397.2,843.5 398.5,832.9 399.8,843.5 401.0,832.9 402.2,843.5 403.5,832.9 404.8,843.5 406.0,831.0 407.2,837.9 408.5,825.4 409.8,834.7 411.0,820.3 412.2,824.6 413.5,805.6 414.8,806.1 416.0,784.1 417.2,782.4 418.5,759.3 419.8,757.7 421.0,735.7 422.2,736.1 423.5,717.2 424.8,721.5 426.0,707.1 427.2,716.3 428.5,705.8 429.8,716.3 431.0,705.9 432.2,717.7 433.5,709.5 434.8,723.6 436.0,717.7 437.2,733.9 438.5,729.8 439.8,747.6 441.0,744.8 442.2,763.7 443.5,761.7 444.8,781.0 446.0,779.1 447.2,798.1 448.5,795.6 449.8,813.7 451.0,810.0 452.2,826.7 453.5,821.2 454.8,835.9 456.0,828.3 457.2,840.7 458.5,830.7 459.8,841.3 461.0,830.7 462.2,841.3 463.5,830.7 464.8,841.3 466.0,826.7 467.2,825.7 468.5,797.6 469.8,787.0 471.0,754.5 472.2,745.4 473.5,720.0 474.8,722.6 476.0,711.0 477.2,721.6 478.5,711.0 479.8,721.6 481.0,711.0 482.2,721.6 483.5,712.3 484.8,726.6 486.0,722.2 487.2,740.9 488.5,740.4 489.8,762.3 491.0,764.2 492.2,787.6 493.5,789.9 494.8,812.9 496.0,813.7 497.2,834.3 498.5,831.9 499.8,848.6 501.0,841.8 502.2,853.6 503.5,843.1 504.8,853.9 506.0,843.6 507.2,854.4 508.5,843.9 509.8,854.5 511.0,843.9 512.2,854.3 513.5,843.7 514.8,854.1 516.0,843.4 517.2,853.8 518.5,843.0 519.8,853.4 521.0,842.6 522.2,853.0 523.5,842.2 524.8,852.6 526.0,841.8 527.2,852.2 528.5,841.5 529.8,852.0 531.0,841.3 532.2,851.9 533.5,841.3 534.8,851.8 536.0,841.3 537.2,851.8 538.5,841.2 539.8,851.8 541.0,841.2 542.2,851.7 543.5,841.2 544.8,851.7 546.0,841.1 547.2,851.6 548.5,841.0 549.8,851.5 551.0,840.9 552.2,851.5 553.5,840.9 554.8,851.4 556.0,840.8 557.2,851.3 558.5,840.7 559.8,851.2 561.0,840.6 562.2,851.1 563.5,840.6 564.8,851.1 566.0,840.5 567.2,851.0 568.5,840.4 569.8,851.0 571.0,840.4" fill="none" stroke="#2580c0" stroke-width="1.25"/></svg>
<span class="t" style="left:321.2px;top:226.3px;font-size:15px;line-height:20px;font-weight:400;color:#000;transform:scaleX(0.9308);">400</span>
<span class="t" style="left:321.2px;top:304.1px;font-size:15px;line-height:20px;font-weight:400;color:#000;transform:scaleX(0.9308);">200</span>
<span class="t" style="left:336.5px;top:391.0px;font-size:15px;line-height:20px;font-weight:400;color:#000;transform:scaleX(0.9588);">0</span>
<span class="t" style="left:315.9px;top:479.0px;font-size:15px;line-height:20px;font-weight:400;color:#000;transform:scaleX(0.9523);">-200</span>
<span class="t" style="left:315.9px;top:556.7px;font-size:15px;line-height:20px;font-weight:400;color:#000;transform:scaleX(0.9523);">-400</span>
<span class="t" style="left:346.0px;top:577.0px;font-size:15px;line-height:20px;font-weight:400;color:#000;transform:scaleX(0.8993);">-1</span>
<span class="t" style="left:321.2px;top:638.8px;font-size:15px;line-height:20px;font-weight:400;color:#000;transform:scaleX(0.9308);">400</span>
<span class="t" style="left:321.2px;top:716.5px;font-size:15px;line-height:20px;font-weight:400;color:#000;transform:scaleX(0.9308);">200</span>
<span class="t" style="left:336.5px;top:804.5px;font-size:15px;line-height:20px;font-weight:400;color:#000;transform:scaleX(0.9588);">0</span>
<span class="t" style="left:315.9px;top:892.5px;font-size:15px;line-height:20px;font-weight:400;color:#000;transform:scaleX(0.9523);">-200</span>
<span class="t" style="left:315.9px;top:971.2px;font-size:15px;line-height:20px;font-weight:400;color:#000;transform:scaleX(0.9523);">-400</span>
<span class="t" style="left:345.7px;top:991.0px;font-size:15px;line-height:20px;font-weight:400;color:#000;transform:scaleX(0.8390);">0</span>
<span class="t" style="left:1272.9px;top:225.4px;font-size:15px;line-height:20px;font-weight:400;color:#000;transform:scaleX(0.9599);">CH番号</span>
<span class="t" style="left:1327.3px;top:225.4px;font-size:15px;line-height:20px;font-weight:400;color:#000;transform:scaleX(0.9754);">CH名称</span>
<span class="t" style="left:1381.2px;top:225.4px;font-size:15px;line-height:20px;font-weight:400;color:#000;transform:scaleX(0.7657);">メインカーソル値</span>
<span class="t" style="left:1477.5px;top:225.4px;font-size:15px;line-height:20px;font-weight:400;color:#000;transform:scaleX(0.9676);">CH単位</span>
<span class="t" style="left:1272.9px;top:245.5px;font-size:15px;line-height:20px;font-weight:700;color:#0f6fb8;transform:scaleX(0.9954);">A9</span>
<span class="t" style="left:1477.5px;top:245.5px;font-size:15px;line-height:20px;font-weight:700;color:#0f6fb8;transform:scaleX(1.0002);">με</span>
<span class="t" style="left:1272.9px;top:265.0px;font-size:15px;line-height:20px;font-weight:700;color:#e5a520;transform:scaleX(0.9954);">A9</span>
<span class="t" style="left:1477.5px;top:265.0px;font-size:15px;line-height:20px;font-weight:700;color:#e5a520;transform:scaleX(1.0002);">με</span>
<!-- p4_float -->
<div class="b" style="left:536.5px;top:272.5px;width:1224.5px;height:822.3px;background:#f3f3f3;border-radius:8px 8px 6px 6px;border:1.4px solid #ababab;box-sizing:border-box;box-shadow:0 14px 46px 2px rgba(0,0,0,0.22)"></div>
<span class="t" style="left:573.0px;top:282.8px;font-size:15.5px;line-height:20px;font-weight:400;color:#8a8a8a;transform:scaleX(0.9520);">SW-A-100</span>
<svg class="b" style="left:546px;top:281px" width="21" height="22"><rect x="2" y="1" width="15.8" height="15" fill="#e7e7e7" stroke="#b4b4b4" stroke-width="0.9"/><circle cx="12.3" cy="6.6" r="3.9" fill="#f6f6f6" stroke="#8a8a8a" stroke-width="1.5"/><path d="M9.4 9.6 L5 13.7" stroke="#6c6c6c" stroke-width="1.9"/><rect x="0" y="16" width="20" height="5" fill="#1a68c4"/><path d="M1.6 18.5 H18.4" stroke="#9db7e3" stroke-width="2.8" stroke-dasharray="3 0.8"/></svg>
<svg class="b" style="left:1600px;top:280px" width="150" height="24"><path d="M7.5 11.6 H18" stroke="#9a9a9a" stroke-width="1"/><rect x="65.7" y="6.7" width="10.4" height="10.4" rx="1.2" fill="none" stroke="#8a8a8a" stroke-width="1"/><path d="M124 6 L135.6 17.6 M135.6 6 L124 17.6" stroke="#8a8a8a" stroke-width="1"/></svg>
<div class="b" style="left:538px;top:311.5px;width:1221.5px;height:29.5px;background:#f0f0f0;border-top:1px solid #b4b4b4;box-sizing:border-box"></div>
<div class="b" style="left:538px;top:340px;width:1221.5px;height:753.4000000000001px;background:linear-gradient(to bottom,rgba(255,255,255,0),rgba(255,255,255,0.32)),linear-gradient(to right,#c3d2f1,#cfdbf4 40%,#f4f7fd);border-radius:0 0 5px 5px"></div>
<svg class="b" style="left:539.6px;top:312.8px" width="182.39999999999998" height="27.69999999999999"><defs><linearGradient id="gt4" x1="0" y1="0" x2="0" y2="1"><stop offset="0" stop-color="#edfcfe"/><stop offset="0.44" stop-color="#edfcfe"/><stop offset="0.57" stop-color="#c3d2f1"/><stop offset="1" stop-color="#c3d2f1"/></linearGradient></defs><path d="M0 27.69999999999999 L27.199999999999932 0.6 H177.89999999999998 Q180.39999999999998 0.6 180.39999999999998 3 V27.69999999999999 Z" fill="url(#gt4)"/><path d="M27.199999999999932 0.6 H177.89999999999998 Q180.39999999999998 0.6 180.39999999999998 3 V27.69999999999999" fill="none" stroke="#777" stroke-width="1.1"/><path d="M0 27.69999999999999 L27.199999999999932 0.6" fill="none" stroke="#3a3a3a" stroke-width="0.9"/></svg>
<span class="t" style="left:577.7px;top:316.7px;font-size:15px;line-height:20px;font-weight:700;color:#000;transform:scaleX(0.9124);">SpectrumAnalysis-7</span>
<svg class="b" style="left:1702px;top:317.8px" width="56" height="16"><path d="M19.9 5.5 H30.9 L25.4 11.5 Z" fill="#111"/><path d="M40.7 3.8 L49.3 12.2 M49.3 3.8 L40.7 12.2" stroke="#111" stroke-width="1.9"/></svg>
<div class="b" style="left:542.5px;top:344.3px;width:1210.8px;height:373.7px;background:#fff;border:2.4px solid #6a6a6a;box-sizing:border-box;border-right-width:1.2px;border-bottom-width:2px"></div>
<div class="b" style="left:542.5px;top:716px;width:1210.8px;height:372.5999999999999px;background:#fff;border:2.4px solid #6a6a6a;box-sizing:border-box;border-right-width:1.2px;border-top-width:2px;border-bottom-width:1.6px"></div>
<svg class="b" style="left:0;top:0" width="1760" height="1095"><path d="M589 365.9 H1541" stroke="#b4b4b4" stroke-width="2"/><path d="M595 404.5 H1540.5" stroke="#ffb6b6" stroke-width="1" stroke-dasharray="2 1"/><path d="M595 482.5 H1540.5" stroke="#ffb6b6" stroke-width="1" stroke-dasharray="2 1"/><path d="M595 560.5 H1540.5" stroke="#ffb6b6" stroke-width="1" stroke-dasharray="2 1"/><path d="M595 638.5 H1540.5" stroke="#ffb6b6" stroke-width="1" stroke-dasharray="2 1"/><path d="M595 443.5 H1540.5" stroke="#c0c0ff" stroke-width="1" stroke-dasharray="2 1"/><path d="M595 599.5 H1540.5" stroke="#c0c0ff" stroke-width="1" stroke-dasharray="2 1"/><path d="M712.5 366 V677" stroke="#ffb6b6" stroke-width="1" stroke-dasharray="2 1"/><path d="M949.5 366 V677" stroke="#ffb6b6" stroke-width="1" stroke-dasharray="2 1"/><path d="M1185.5 366 V677" stroke="#ffb6b6" stroke-width="1" stroke-dasharray="2 1"/><path d="M1422.5 366 V677" stroke="#ffb6b6" stroke-width="1" stroke-dasharray="2 1"/><path d="M830.5 366 V677" stroke="#c0c0ff" stroke-width="1" stroke-dasharray="2 1"/><path d="M1067.5 366 V677" stroke="#c0c0ff" stroke-width="1" stroke-dasharray="2 1"/><path d="M1303.5 366 V677" stroke="#c0c0ff" stroke-width="1" stroke-dasharray="2 1"/><path d="M595 521.2 H1540.5" stroke="#7a7a7a" stroke-width="1.2"/><path d="M594.5 365 V682" stroke="#444" stroke-width="1" fill="none"/><path d="M1540.5 365 V682" stroke="#777" stroke-width="1" fill="none"/><path d="M589 677.3 H1541" stroke="#5a5a5a" stroke-width="1.6" fill="none"/><polyline points="594.3,538.8 599.0,546.6 603.8,538.8 608.5,546.6 613.2,538.8 617.9,546.6 622.7,538.8 627.4,546.6 632.1,538.8 636.9,546.6 641.6,538.8 646.3,546.6 651.0,538.8 655.8,546.6 660.5,538.8 665.2,546.6 669.9,538.8 674.7,546.6 679.4,538.8 684.1,546.6 688.9,538.8 693.6,546.6 698.3,538.8 703.0,546.6 707.8,538.8 712.5,546.6 717.2,538.8 722.0,546.6 726.7,538.8 731.4,546.6 736.1,538.8 740.9,546.6 745.6,538.8 750.3,546.6 755.1,538.8 759.8,546.6 764.5,538.8 769.2,546.6 774.0,538.8 778.7,546.6 783.4,538.8 788.1,546.6 792.9,538.8 797.6,546.6 802.3,538.8 807.1,546.6 811.8,538.8 816.5,546.6 821.2,537.1 826.0,541.6 830.7,532.1 835.4,538.8 840.2,527.5 844.9,529.8 849.6,514.6 854.3,513.4 859.1,495.5 863.8,492.4 868.5,473.5 873.3,470.5 878.0,452.6 882.7,451.4 887.4,436.2 892.2,438.4 896.9,427.2 901.6,433.8 906.3,426.0 911.1,433.8 915.8,426.2 920.5,435.1 925.3,429.4 930.0,440.3 934.7,436.6 939.4,449.4 944.2,447.3 948.9,461.5 953.6,460.7 958.4,475.8 963.1,475.6 967.8,491.2 972.5,491.0 977.3,506.3 982.0,505.7 986.7,520.2 991.5,518.5 996.2,531.6 1000.9,528.4 1005.6,539.8 1010.4,534.7 1015.1,544.1 1019.8,536.8 1024.5,544.6 1029.3,536.8 1034.0,544.6 1038.7,536.8 1043.5,544.6 1048.2,533.2 1052.9,530.8 1057.6,507.4 1062.4,496.5 1067.1,469.2 1071.8,459.6 1076.6,438.7 1081.3,439.4 1086.0,430.7 1090.7,438.5 1095.5,430.7 1100.2,438.5 1104.9,430.7 1109.7,438.5 1114.4,431.8 1119.1,443.0 1123.8,440.6 1128.6,455.7 1133.3,456.7 1138.0,474.6 1142.7,477.8 1147.5,497.0 1152.2,500.6 1156.9,519.4 1161.7,521.7 1166.4,538.4 1171.1,537.9 1175.8,551.1 1180.6,546.6 1185.3,555.5 1190.0,547.8 1194.8,555.8 1199.5,548.2 1204.2,556.2 1208.9,548.5 1213.7,556.3 1218.4,548.4 1223.1,556.2 1227.9,548.3 1232.6,556.0 1237.3,548.0 1242.0,555.7 1246.8,547.7 1251.5,555.3 1256.2,547.3 1260.9,554.9 1265.7,547.0 1270.4,554.6 1275.1,546.6 1279.9,554.3 1284.6,546.4 1289.3,554.1 1294.0,546.2 1298.8,554.0 1303.5,546.2 1308.2,554.0 1313.0,546.2 1317.7,553.9 1322.4,546.1 1327.1,553.9 1331.9,546.1 1336.6,553.9 1341.3,546.1 1346.1,553.8 1350.8,546.0 1355.5,553.8 1360.2,545.9 1365.0,553.7 1369.7,545.9 1374.4,553.6 1379.1,545.8 1383.9,553.6 1388.6,545.7 1393.3,553.5 1398.1,545.6 1402.8,553.4 1407.5,545.6 1412.2,553.3 1417.0,545.5 1421.7,553.3 1426.4,545.5 1431.2,553.2 1435.9,545.4 1440.6,553.2" fill="none" stroke="#2f8cc8" stroke-width="1.25" stroke-linejoin="round"/><g stroke="#333" stroke-width="1" fill="none"><path d="M1540.5 365.9 H1753 M1540.5 385.5 H1753 M1540.5 405.3 H1753 M1595.3 365.9 V405.3 M1698.5 365.9 V405.3"/></g><path d="M575 736.7 H1493.5" stroke="#b4b4b4" stroke-width="2"/><path d="M581 775.5 H1493" stroke="#ffb6b6" stroke-width="1" stroke-dasharray="2 1"/><path d="M581 853.5 H1493" stroke="#ffb6b6" stroke-width="1" stroke-dasharray="2 1"/><path d="M581 931.5 H1493" stroke="#ffb6b6" stroke-width="1" stroke-dasharray="2 1"/><path d="M581 1009.5 H1493" stroke="#ffb6b6" stroke-width="1" stroke-dasharray="2 1"/><path d="M581 814.5 H1493" stroke="#c0c0ff" stroke-width="1" stroke-dasharray="2 1"/><path d="M581 892.5 H1493" stroke="#c0c0ff" stroke-width="1" stroke-dasharray="2 1"/><path d="M581 970.5 H1493" stroke="#c0c0ff" stroke-width="1" stroke-dasharray="2 1"/><path d="M751.5 738 V1048" stroke="#ffb6b6" stroke-width="1" stroke-dasharray="2 1"/><path d="M1094.5 738 V1048" stroke="#ffb6b6" stroke-width="1" stroke-dasharray="2 1"/><path d="M1436.5 738 V1048" stroke="#ffb6b6" stroke-width="1" stroke-dasharray="2 1"/><path d="M922.5 738 V1048" stroke="#c0c0ff" stroke-width="1" stroke-dasharray="2 1"/><path d="M1265.5 738 V1048" stroke="#c0c0ff" stroke-width="1" stroke-dasharray="2 1"/><path d="M580.5 736.5 V1053" stroke="#444" stroke-width="1" fill="none"/><path d="M1493.5 736.5 V1053" stroke="#777" stroke-width="1" fill="none"/><path d="M575 1048.3 H1494" stroke="#5a5a5a" stroke-width="1.6" fill="none"/><rect x="606.9" y="737.7" width="2.8" height="310" fill="#7aec5e"/><polyline points="580.6,1048.3 585.1,853.3 589.5,776.9 594.0,1030.4 598.4,914.5 602.9,893.5 607.3,840.4 611.8,915.7 616.3,992.5 620.7,1008.5 625.2,1012.0 629.6,1009.3 634.1,1024.1 638.5,1035.8 643.0,1041.3 647.5,1041.3 651.9,1033.5 656.4,1034.6 660.8,1035.0 665.3,1026.8 669.7,1037.0 674.2,1039.7 678.7,1028.8 683.1,1039.3 687.6,1044.8 692.0,1042.5 696.5,1041.3 700.9,1045.6 705.4,1043.2 709.9,1040.1 714.3,1045.2 718.8,1046.3 723.2,1040.1 727.7,1046.7 732.1,1047.1 736.6,1042.1 741.1,1046.0 745.5,1047.1 750.0,1044.4 754.4,1044.8 758.9,1046.7 763.3,1047.1 767.8,1044.9 772.3,1046.8 776.7,1047.3 781.2,1045.8 785.6,1047.1 790.1,1047.3 794.5,1045.9 799.0,1045.3 803.5,1047.0 807.9,1047.1 812.4,1047.2 816.8,1047.0 821.3,1045.1 825.7,1047.2 830.2,1045.2 834.6,1045.6 839.1,1046.6 843.6,1046.9 848.0,1046.2 852.5,1046.5 856.9,1047.3 861.4,1043.0 865.8,1047.1 870.3,1047.2 874.8,1047.0 879.2,1047.1 883.7,1046.7 888.1,1046.8 892.6,1044.9 897.0,1046.8 901.5,1046.3 906.0,1046.9 910.4,1047.3 914.9,1047.2 919.3,1047.2 923.8,1044.8 928.2,1046.2 932.7,1047.1 937.2,1046.9 941.6,1046.1 946.1,1047.1 950.5,1046.7 955.0,1043.5 959.4,1047.1 963.9,1046.9 968.4,1045.9 972.8,1046.6 977.3,1046.7 981.7,1046.5 986.2,1044.6 990.6,1047.2 995.1,1046.2 999.6,1046.7 1004.0,1047.2 1008.5,1046.0 1012.9,1047.3 1017.4,1044.9 1021.8,1045.2 1026.3,1046.9 1030.8,1046.6 1035.2,1046.5 1039.7,1046.8 1044.1,1046.9 1048.6,1043.8 1053.0,1047.0 1057.5,1046.7 1062.0,1044.8 1066.4,1047.0 1070.9,1046.8 1075.3,1047.2 1079.8,1044.8 1084.2,1046.8 1088.7,1044.6 1093.2,1046.7 1097.6,1047.1 1102.1,1046.3 1106.5,1046.8 1111.0,1045.4 1115.4,1046.1 1119.9,1047.2 1124.4,1047.2 1128.8,1047.2 1133.3,1042.1 1137.7,1047.1 1142.2,1042.1 1146.6,1026.8" fill="none" stroke="#2f8cc8" stroke-width="1.25" stroke-linejoin="round"/><g stroke="#333" stroke-width="1" fill="none"><path d="M1493.7 767.1 H1753 M1493.7 786.6 H1753 M1493.7 806.5 H1753 M1493.7 767.1 V806.5 M1548 767.1 V806.5 M1602.5 767.1 V806.5 M1698.3 767.1 V806.5"/></g><path d="M1494 755.5 H1704" stroke="#9a9a9a" stroke-width="1"/></svg>
<span class="t" style="left:570.0px;top:366.9px;font-size:15px;line-height:20px;font-weight:400;color:#000;transform:scaleX(0.9308);">400</span>
<span class="t" style="left:570.0px;top:434.6px;font-size:15px;line-height:20px;font-weight:400;color:#000;transform:scaleX(0.9308);">200</span>
<span class="t" style="left:585.3px;top:512.6px;font-size:15px;line-height:20px;font-weight:400;color:#000;transform:scaleX(0.9588);">0</span>
<span class="t" style="left:564.9px;top:591.0px;font-size:15px;line-height:20px;font-weight:400;color:#000;transform:scaleX(0.9457);">-200</span>
<span class="t" style="left:564.9px;top:658.0px;font-size:15px;line-height:20px;font-weight:400;color:#000;transform:scaleX(0.9457);">-400</span>
<span class="t" style="left:595.0px;top:677.5px;font-size:15px;line-height:20px;font-weight:400;color:#000;transform:scaleX(0.8677);">0.0</span>
<span class="t" style="left:821.5px;top:677.5px;font-size:15px;line-height:20px;font-weight:400;color:#000;transform:scaleX(0.8869);">0.5</span>
<span class="t" style="left:1058.6px;top:677.5px;font-size:15px;line-height:20px;font-weight:400;color:#000;transform:scaleX(0.8677);">1.0</span>
<span class="t" style="left:1294.6px;top:677.5px;font-size:15px;line-height:20px;font-weight:400;color:#000;transform:scaleX(0.8821);">1.5</span>
<span class="t" style="left:1521.7px;top:677.5px;font-size:15px;line-height:20px;font-weight:400;color:#000;transform:scaleX(0.8677);">2.0</span>
<span class="t" style="left:1060.3px;top:698.0px;font-size:15px;line-height:20px;font-weight:400;color:#000;transform:scaleX(0.9026);">[s]</span>
<span class="b" style="left:558px;top:523.3px;width:0;height:0"><span style="position:absolute;white-space:pre;font-size:15px;line-height:20px;left:-11.2px;top:-10px;width:23.7px;transform-origin:11.2px 10px;transform:rotate(-90deg) scaleX(0.9505)">[με]</span></span>
<span class="b" style="left:558px;top:894.2px;width:0;height:0"><span style="position:absolute;white-space:pre;font-size:15px;line-height:20px;left:-11.2px;top:-10px;width:23.7px;transform-origin:11.2px 10px;transform:rotate(-90deg) scaleX(0.9505)">[με]</span></span>
<span class="t" style="left:1543.3px;top:366.2px;font-size:15px;line-height:20px;font-weight:400;color:#000;transform:scaleX(0.9502);">CH番号</span>
<span class="t" style="left:1622.0px;top:366.2px;font-size:15px;line-height:20px;font-weight:400;color:#000;transform:scaleX(0.9618);">CH名称</span>
<span class="t" style="left:1700.6px;top:366.2px;font-size:15px;line-height:20px;font-weight:400;color:#000;transform:scaleX(0.9638);">CH単位</span>
<span class="t" style="left:1543.3px;top:386.7px;font-size:15px;line-height:20px;font-weight:700;color:#0f6fb8;transform:scaleX(0.9126);">Fa9</span>
<span class="t" style="left:1597.7px;top:386.7px;font-size:15px;line-height:20px;font-weight:700;color:#0f6fb8;transform:scaleX(0.9092);">CH-A A9 データ</span>
<span class="t" style="left:1700.6px;top:386.7px;font-size:15px;line-height:20px;font-weight:700;color:#0f6fb8;transform:scaleX(1.0309);">με</span>
<span class="t" style="left:564.2px;top:737.6px;font-size:15px;line-height:20px;font-weight:400;color:#000;transform:scaleX(0.9228);">80</span>
<span class="t" style="left:564.2px;top:806.0px;font-size:15px;line-height:20px;font-weight:400;color:#000;transform:scaleX(0.9228);">60</span>
<span class="t" style="left:564.2px;top:884.0px;font-size:15px;line-height:20px;font-weight:400;color:#000;transform:scaleX(0.9228);">40</span>
<span class="t" style="left:564.2px;top:961.7px;font-size:15px;line-height:20px;font-weight:400;color:#000;transform:scaleX(0.9228);">20</span>
<span class="t" style="left:572.8px;top:1028.4px;font-size:15px;line-height:20px;font-weight:400;color:#000;transform:scaleX(0.8150);">0</span>
<span class="t" style="left:580.6px;top:1049.0px;font-size:15px;line-height:20px;font-weight:400;color:#000;transform:scaleX(0.8390);">0</span>
<span class="t" style="left:586.5px;top:1049.0px;font-size:15px;line-height:20px;font-weight:400;color:#000;transform:scaleX(0.9013);">0.0</span>
<span class="t" style="left:914.9px;top:1049.0px;font-size:15px;line-height:20px;font-weight:400;color:#000;transform:scaleX(0.9648);">30</span>
<span class="t" style="left:1257.3px;top:1049.0px;font-size:15px;line-height:20px;font-weight:400;color:#000;transform:scaleX(0.9408);">60</span>
<span class="t" style="left:1466.3px;top:1049.0px;font-size:15px;line-height:20px;font-weight:400;color:#000;transform:scaleX(0.9246);">80.0</span>
<span class="t" style="left:1024.4px;top:1068.8px;font-size:15px;line-height:20px;font-weight:400;color:#000;transform:scaleX(0.9336);">[Hz]</span>
<span class="t" style="left:1496.0px;top:737.6px;font-size:15px;line-height:20px;font-weight:400;color:#14e014;transform:scaleX(0.9928);">Cursor Main</span>
<span class="t" style="left:1627.8px;top:737.6px;font-size:15px;line-height:20px;font-weight:400;color:#14e014;transform:scaleX(0.9670);">2.34375 Hz</span>
<span class="t" style="left:1496.0px;top:767.7px;font-size:15px;line-height:20px;font-weight:400;color:#000;transform:scaleX(0.9580);">CH番号</span>
<span class="t" style="left:1550.8px;top:767.7px;font-size:15px;line-height:20px;font-weight:400;color:#000;transform:scaleX(0.9696);">CH名称</span>
<span class="t" style="left:1604.7px;top:767.7px;font-size:15px;line-height:20px;font-weight:400;color:#000;transform:scaleX(0.7582);">メインカーソル値</span>
<span class="t" style="left:1700.6px;top:767.7px;font-size:15px;line-height:20px;font-weight:400;color:#000;transform:scaleX(0.9638);">CH単位</span>
<span class="t" style="left:1496.0px;top:787.9px;font-size:15px;line-height:20px;font-weight:700;color:#0f6fb8;transform:scaleX(0.9499);">Fi9</span>
<span class="t" style="left:1550.4px;top:787.9px;font-size:15px;line-height:20px;font-weight:700;color:#0f6fb8;transform:scaleX(0.9995);">振幅</span>
<span class="t" style="left:1657.9px;top:787.9px;font-size:15px;line-height:20px;font-weight:700;color:#0f6fb8;transform:scaleX(0.9934);">53.25</span>
<span class="t" style="left:1700.6px;top:787.9px;font-size:15px;line-height:20px;font-weight:700;color:#0f6fb8;transform:scaleX(1.0309);">με</span>
<!-- p5_icons -->
<svg class="b" style="left:0;top:57px" width="1060" height="90"><path d="M18.4 9.3 V21.1 H31.799999999999997" fill="none" stroke="#1f3a68" stroke-width="1.25"/><path d="M20.0 15.8 C21.4 13.5 23.0 13.3 24.7 15.3 S27.9 18.700000000000003 31.0 16.5" fill="none" stroke="#1f3a68" stroke-width="1.25"/><path d="M34.7 9.3 V21.1 H48.1" fill="none" stroke="#1f3a68" stroke-width="1.25"/><path d="M36.300000000000004 15.8 C37.7 13.5 39.300000000000004 13.3 41.0 15.3 S44.2 18.700000000000003 47.300000000000004 16.5" fill="none" stroke="#1f3a68" stroke-width="1.25"/><path d="M18.4 25.5 V37.3 H31.799999999999997" fill="none" stroke="#1f3a68" stroke-width="1.25"/><path d="M20.0 32.0 C21.4 29.7 23.0 29.5 24.7 31.5 S27.9 34.9 31.0 32.7" fill="none" stroke="#1f3a68" stroke-width="1.25"/><path d="M34.7 25.5 V37.3 H48.1" fill="none" stroke="#1f3a68" stroke-width="1.25"/><path d="M36.300000000000004 32.0 C37.7 29.7 39.300000000000004 29.5 41.0 31.5 S44.2 34.9 47.300000000000004 32.7" fill="none" stroke="#1f3a68" stroke-width="1.25"/><path d="M82.4 11 V36.3 H109.9" fill="none" stroke="#1f3a68" stroke-width="1.5"/><path d="M84.30000000000001 13.5 V35" stroke="#1f3a68" stroke-width="2.4" stroke-dasharray="0.8 1.12"/><path d="M87.4 24.8 C89.2 20.2 92.6 17.6 95.6 22.2 C98.4 26.6 101.6 32 107 25" fill="none" stroke="#1f3a68" stroke-width="1.8" stroke-linecap="round"/><path d="M127.4 11 V36.3 H154.9" fill="none" stroke="#1f3a68" stroke-width="1.5"/><path d="M129.3 13.5 V35" stroke="#1f3a68" stroke-width="2.4" stroke-dasharray="0.8 1.12"/><path d="M142.6 23.5 C139.5 21 134 22.5 133.3 27.2 C132.7 31.5 137.5 34.2 140.8 31.6 C144.3 28.8 142.5 24.5 142.6 23.5 C142.8 21 141.5 16.5 145.3 14.6 C149 12.9 152.3 16 151.6 19.4 C151 23 146 25.5 142.6 23.5 Z" fill="none" stroke="#1f3a68" stroke-width="1.8"/><path d="M172.5 11 V22.2 H200" fill="none" stroke="#1f3a68" stroke-width="1.3"/><path d="M176.5 20.4 V12.4 H180.7 V20.4 H184.5 V12.4 H188.4 V20.4 H192.5 V12.4 H196.7 V20.4" fill="none" stroke="#46597f" stroke-width="1.1"/><path d="M172.5 25.2 V36.4 H200" fill="none" stroke="#1f3a68" stroke-width="1.3"/><path d="M176.5 34.6 V26.599999999999998 H180.7 V34.6 H184.5 V26.599999999999998 H188.4 V34.6 H192.5 V26.599999999999998 H196.7 V34.6" fill="none" stroke="#46597f" stroke-width="1.1"/><path d="M259 15.4 H269.7 L270.8 22 H257.8 Z" fill="#c9d4e6"/><path d="M257.4 22.3 H271.2" stroke="#1f3a68" stroke-width="1.5"/><path d="M259.2 15.6 L258 21.6 M269.5 15.6 L270.7 21.6" stroke="#8fa0c0" stroke-width="0.8"/><path d="M264.3 9.2 C261.9 9.2 260.7 11.2 260.7 13.3 C260.7 15.8 263 17.8 264.3 19.7 C265.6 17.8 268 15.8 268 13.3 C268 11.2 266.7 9.2 264.3 9.2 Z" fill="#1f3a68"/><circle cx="264.3" cy="13.3" r="1.35" fill="#fff"/><path d="M257.6 35.5 V47.3 H270" fill="none" stroke="#7b8aa6" stroke-width="1.2"/><g fill="none" stroke="#1f3a68" stroke-width="1.1"><path d="M260 38 C262 36.6 263.3 39 265 38 S267.6 36.8 269.2 37.6"/><path d="M260 41.3 C262 39.9 263.3 42.3 265 41.3 S267.6 40.1 269.2 40.9"/><path d="M260 44.6 C262 43.2 263.3 45.6 265 44.6 S267.6 43.4 269.2 44.2"/></g><rect x="257.4" y="59.9" width="12.4" height="11.6" fill="none" stroke="#1f3a68" stroke-width="1.3"/><path d="M261.3 62.6 V68.8 L266.7 65.7 Z" fill="#1f3a68"/><rect x="356.5" y="9.9" width="12.6" height="12.4" fill="#fff" stroke="#1f3a68" stroke-width="1.4"/><path d="M357 22 V18.8 L360.3 15.8 L363 18.2 L366 15 L368.8 17.6 V22 Z" fill="#1f3a68"/><circle cx="360.2" cy="13.2" r="1.1" fill="#1f3a68"/><path d="M500.9 10 V35.3 H527.5" fill="none" stroke="#1f3a68" stroke-width="1.4"/><path d="M511.0 13.8 V32.6 M505.4 24.4 H517.2" stroke="#1f3a68" stroke-width="1.4"/><path d="M504.59999999999997 10.2 C506.2 17.5 508.8 21.6 511.0 24.4 M511.0 24.4 C514.8 27.7 519.7 30 526.0 31.2" fill="none" stroke="#1f3a68" stroke-width="1.1"/><path d="M749.7 10 V35.3 H776.3" fill="none" stroke="#1f3a68" stroke-width="1.4"/><path d="M759.8 13.8 V32.6 M754.2 24.4 H766" stroke="#1f3a68" stroke-width="1.4"/><path d="M753.4 10.2 C755 17.5 757.6 21.6 759.8 24.4 M759.8 24.4 C763.6 27.7 768.5 30 774.8 31.2" fill="none" stroke="#1f3a68" stroke-width="1.1"/><rect x="1009.8" y="18" width="22.4" height="16.2" fill="#e6e9f1" stroke="#1f3a68" stroke-width="1.7"/><path d="M1009 13.2 H1026.6 V14.8 H1028.4 V13.2 H1033 V19 H1009 Z" fill="#1f3a68"/><rect x="1013" y="21" width="4" height="2" fill="#1f3a68"/><rect x="1013" y="25" width="4" height="2" fill="#1f3a68"/><rect x="1013" y="29" width="4" height="2" fill="#1f3a68"/><rect x="1019" y="21" width="4" height="2" fill="#1f3a68"/><rect x="1019" y="25" width="4" height="2" fill="#1f3a68"/><rect x="1019" y="29" width="4" height="2" fill="#1f3a68"/><rect x="1025" y="21" width="4" height="2" fill="#1f3a68"/><rect x="1025" y="25" width="4" height="2" fill="#1f3a68"/><rect x="1025" y="29" width="4" height="2" fill="#1f3a68"/><circle cx="1014.8" cy="17" r="7.6" fill="#f0f0f0" stroke="#1f3a68" stroke-width="1.1"/><path d="M1014.6 11.5 V17.5 H1020.6" fill="none" stroke="#1f3a68" stroke-width="1.7"/></svg>
<span class="t" style="left:217.8px;top:68.1px;font-size:19px;line-height:25px;font-weight:400;color:#1f3a68;transform:scaleX(0.9021);">123</span>
</body></html>
